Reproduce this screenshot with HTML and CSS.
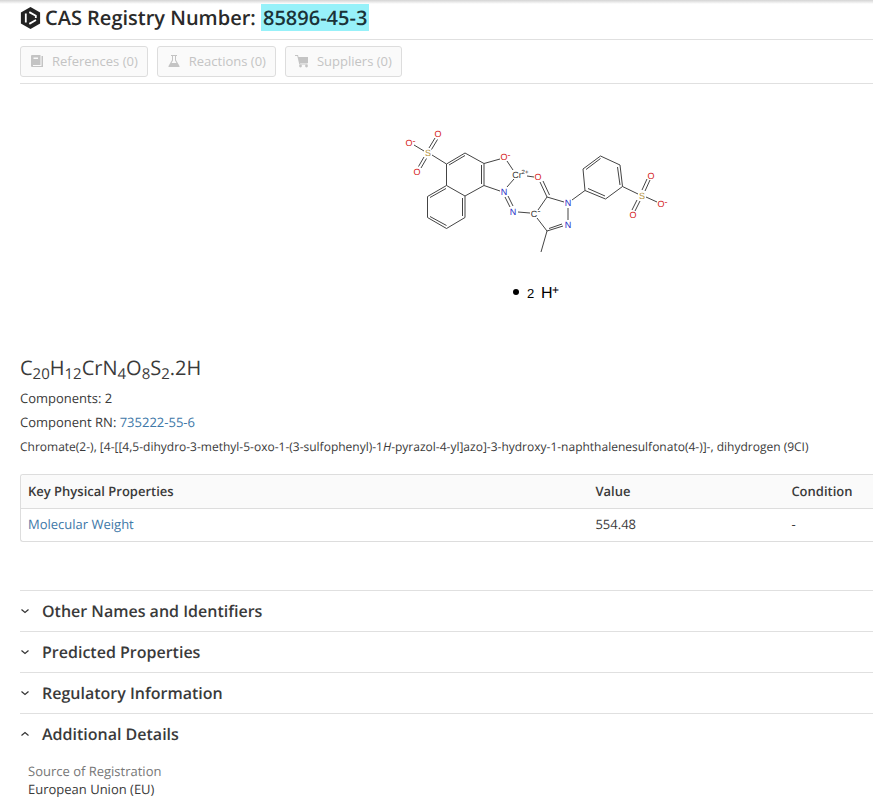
FILE: index.html
```html
<!DOCTYPE html>
<html lang="en">
    <head>
        <meta charset="utf-8">
        <title>CAS Registry Number: 85896-45-3</title>
        <link rel="stylesheet" href="styles.css">
    </head>
    <body>
        <main class="substance">
            <header class="title">
                <svg class="logo" viewBox="0 0 20 22" aria-hidden="true">
                    <path fill="#222" d="M10 0L19.600 5.500V16.500L10 22L.400 16.500V5.500Z"/>
                    <path fill="none" stroke="#fff" stroke-width="1.800" d="M5.300 6.500V15.500M8.800 5.100L15.300 8.800V11M8.800 16.900L15.500 13"/>
                </svg>
                <h1>CAS Registry Number: <mark>85896-45-3</mark></h1>
            </header>

            <div class="actions">
                <button disabled>
                    <svg viewBox="0 0 14 14"><path fill="currentColor" fill-rule="evenodd" d="M1 2Q1 1 2 1H10.500V11H3V12H11.500V2H13V13H2Q1 13 1 12ZM3.500 3.500V5H8V3.500Z"/></svg>
                    References (0)
                </button>
                <button disabled>
                    <svg viewBox="0 0 14 14"><path fill="currentColor" fill-rule="evenodd" d="M4 1H10V2H9V6L12.500 12Q13 13 12 13H2Q1 13 1.500 12L5 6V2H4ZM6 2V6.500L4.500 9H9.500L8 6.500V2Z"/></svg>
                    Reactions (0)
                </button>
                <button disabled>
                    <svg viewBox="0 0 14 14"><path fill="currentColor" d="M0 1H3L3.500 3H13V9H5L5.300 9.500H12.500V10.500H4.300L2.300 2H0Z"/><circle fill="currentColor" cx="5.500" cy="12" r="1.400"/><circle fill="currentColor" cx="11.500" cy="12" r="1.400"/></svg>
                    Suppliers (0)
                </button>
            </div>

            <figure class="structure">
                <svg viewBox="400 120 275 190" role="img" aria-label="Chemical structure">
                    <g class="bonds">
                        <!-- sulfonate on the naphthalene -->
                        <path d="M414 145L424 151M432 155L446.500 164M429 148L435 138M431.500 149.500L437.500 139.500M424 157L418.500 166.500M426.500 158.500L421 168"/>
                        <!-- naphthalene -->
                        <path d="M446.500 164L465 153L484 163.500V185.500L465 196L446.500 185.500ZM446.500 185.500L427.500 196.500V217.500L446.500 228.500L465 217.500V196"/>
                        <path d="M449 165L465 155.500M481.500 165V184M446 188.500L430 197.500M430 216.500L446.500 225.500M462.500 216V198"/>
                        <!-- chelate ring -->
                        <path d="M484 163.500L500 159M484 185.500L500 191M507 161L513 170M514 179L507 187M527 176L534 177M505 197L510 207M508 196L513 206M518 212L530 213"/>
                        <path d="M540 182L547 197M543 181L549.500 195"/>
                        <!-- pyrazole -->
                        <path d="M547 197L564 202M547 197L538 210M568 208V220M537 218L547 231L563 226M549 228.500L562 224M547 231L541 252"/>
                        <!-- phenyl -->
                        <path d="M572 200L585 190.500M585 190.500L583 169L600.500 156L620 165L622.500 186.500L605.500 199ZM586 169.500L600.500 158.500M617.500 167L620 185M605 196L588 188.500"/>
                        <path d="M622.500 186.500L638 194M646 197L657 202M642 190L647 179M645 191L650 180M637 200L632 210M640 201L635 211"/>
                    </g>
                    <g class="atoms">
                        <g class="oxygen">
                            <text x="409" y="146">O</text><text x="414" y="144">-</text>
                            <text x="438" y="137">O</text><text x="417" y="175">O</text>
                            <text x="504" y="160">O</text><text x="509" y="158">-</text>
                            <text x="538" y="180">O</text>
                            <text x="651" y="179">O</text><text x="633" y="218">O</text>
                            <text x="661" y="207">O</text><text x="666" y="205">-</text>
                        </g>
                        <g class="nitrogen">
                            <text x="504" y="195">N</text><text x="513" y="215">N</text>
                            <text x="568" y="206">N</text><text x="568" y="228">N</text>
                        </g>
                        <g class="sulfur">
                            <text x="428" y="156">S</text><text x="642" y="199">S</text>
                        </g>
                        <text x="517" y="178">Cr</text><text class="charge" x="525" y="174">2+</text>
                        <text x="534" y="217">C</text><text x="539" y="214">-</text>
                    </g>
                    <g class="hydrogen">
                        <circle cx="516" cy="292" r="3"/>
                        <text class="count" x="527" y="298">2</text>
                        <text x="541" y="298">H</text><text class="plus" x="552" y="294">+</text>
                    </g>
                </svg>
            </figure>

            <section class="summary">
                <p class="formula">C<sub>20</sub>H<sub>12</sub>CrN<sub>4</sub>O<sub>8</sub>S<sub>2</sub>.2H</p>
                <p>Components: 2</p>
                <p>Component RN: <a href="#">735222-55-6</a></p>
                <p class="name">Chromate(2-), [4-[[4,5-dihydro-3-methyl-5-oxo-1-(3-sulfophenyl)-1<i>H</i>-pyrazol-4-yl]azo]-3-hydroxy-1-naphthalenesulfonato(4-)]-, dihydrogen (9CI)</p>
            </section>

            <div class="properties">
                <table>
                    <thead>
                        <tr><th>Key Physical Properties</th><th>Value</th><th>Condition</th></tr>
                    </thead>
                    <tbody>
                        <tr><td><a href="#">Molecular Weight</a></td><td>554.48</td><td>-</td></tr>
                    </tbody>
                </table>
            </div>

            <div class="sections">
                <details>
                    <summary><svg viewBox="0 0 10 10"><path d="M1.500 3.500L5 6.500L8.500 3.500"/></svg>Other Names and Identifiers</summary>
                </details>
                <details>
                    <summary><svg viewBox="0 0 10 10"><path d="M1.500 3.500L5 6.500L8.500 3.500"/></svg>Predicted Properties</summary>
                </details>
                <details>
                    <summary><svg viewBox="0 0 10 10"><path d="M1.500 3.500L5 6.500L8.500 3.500"/></svg>Regulatory Information</summary>
                </details>
                <details open>
                    <summary><svg viewBox="0 0 10 10"><path d="M1.500 3.500L5 6.500L8.500 3.500"/></svg>Additional Details</summary>
                    <dl>
                        <dt>Source of Registration</dt>
                        <dd>European Union (EU)</dd>
                    </dl>
                </details>
            </div>
        </main>
    </body>
</html>
```

FILE: styles.css
```css
* {
    box-sizing: border-box;
}

body {
    margin: 0;
    background: linear-gradient(#d4d4d4, #fff 4px) no-repeat #fff;
    color: #3a3a3a;
    font-family: "Open Sans", sans-serif;
    font-size: 13px;
    line-height: 18px;
    text-rendering: geometricPrecision;
}

a {
    color: #4078a8;
    text-decoration: none;
}

.substance {
    padding-left: 20px;
}

.title {
    display: flex;
    align-items: center;
    gap: 4px;
    height: 40px;
    padding-bottom: 4px;
    border-bottom: 1px solid #e0e0e0;
}

.logo {
    width: 21px;
    height: 22px;
}

h1 {
    margin: 0;
    color: #2a2a2a;
    font-size: 20px;
    font-weight: 600;
    line-height: 27px;
}

mark {
    padding: 0 2px;
    background: #97f1f9;
    color: #1b3338;
}

.actions {
    display: flex;
    gap: 9px;
    padding: 6px 0 7px;
    border-bottom: 1px solid #e0e0e0;
}

.actions button {
    display: flex;
    align-items: center;
    gap: 8px;
    height: 31px;
    margin-bottom: -1px;
    padding: 0 9px 2px;
    border: 1px solid #ddd;
    border-radius: 3px;
    background: #fafafa;
    color: #c4c4c4;
    font: inherit;
}

.actions svg {
    width: 14px;
    height: 14px;
}

.structure {
    display: flex;
    justify-content: center;
    margin: 0;
    padding: 36px 0 43px 182px;
}

.structure svg {
    width: 275px;
    height: 190px;
}

.bonds {
    fill: none;
    stroke: #444;
    stroke-width: 1;
}

.atoms {
    fill: #333;
    font-family: "Liberation Sans", sans-serif;
    font-size: 9px;
    text-anchor: middle;
}

.oxygen {
    fill: #d42020;
}

.nitrogen {
    fill: #2b35c8;
}

.sulfur {
    fill: #b08a30;
}

.charge {
    font-size: 6px;
}

.hydrogen {
    fill: #000;
    font-family: "Liberation Sans", sans-serif;
    font-size: 16px;
}

.count {
    font-size: 13px;
}

.plus {
    font-size: 12px;
}

.summary p {
    margin: 0 0 6px;
}

.summary .formula {
    margin: 0 0 6px;
    font-size: 20px;
    line-height: 30px;
}

.formula sub {
    font-size: 15px;
    line-height: 0;
    vertical-align: -4px;
}

.summary .name {
    margin-top: 7px;
    font-size: 12px;
}

.properties {
    margin: 18px 0 48px;
    border: 1px solid #ddd;
    border-right: 0;
    border-radius: 3px 0 0 3px;
    overflow: hidden;
}

table {
    width: 100%;
    border-collapse: collapse;
    table-layout: fixed;
}

th, td {
    height: 33px;
    padding: 0 7px;
    text-align: left;
}

td {
    padding-bottom: 2px;
}

th {
    border-bottom: 1px solid #ddd;
    background: #fafafa;
    font-weight: 600;
}

th:first-child {
    width: 66.6%;
}

th:nth-child(2) {
    width: 23%;
}

details {
    border-top: 1px solid #e0e0e0;
}

summary {
    display: flex;
    align-items: center;
    gap: 12px;
    height: 40px;
    font-size: 16px;
    font-weight: 600;
    list-style: none;
}

summary svg {
    width: 10px;
    height: 10px;
    fill: none;
    stroke: #333;
    stroke-width: 1.2;
}

details[open] summary svg {
    transform: rotate(180deg);
}

dl {
    margin: 0;
    padding: 8px 8px 0;
}

dt {
    color: #777;
}

dd {
    margin: 0;
}
```
